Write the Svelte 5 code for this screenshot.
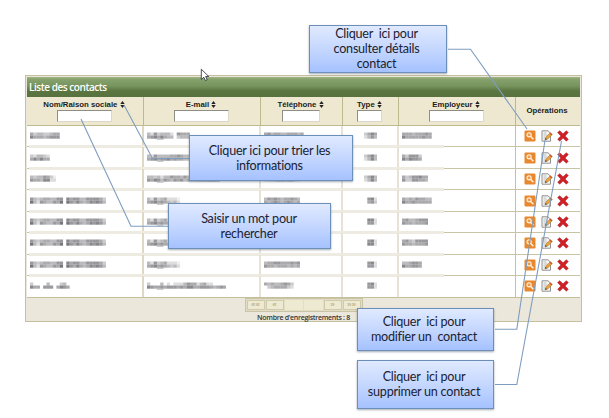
<script>
  const columns = [
    { label: 'Nom/Raison sociale', input: 55 },
    { label: 'E-mail', input: 55 },
    { label: 'Téléphone', input: 38 },
    { label: 'Type', input: 25 },
    { label: 'Employeur', input: 55 }
  ];

  // Anonymised cell contents: one digit of ink density per block, two bands per cell.
  const full = ['64345544660756644666653', '84265446580865754576764'];
  const mail = ['4263452221', '5675654342'];
  const rows = [
    [['534433455', '755545666'], ['4263444206555', '5675754403444'], ['564554455545', '000000000000'], ['3575', '2464'], ['555455565', '755555655']],
    [['324432', '575755'], ['42644445565444', '56756675655444'], ['453445', '444444'], ['3574', '2474'], ['536663', '757665']],
    [['43446531', '65547722'], ['4434244655464544345464', '6576465465645334445554'], ['54445565434', '12234434421'], ['3574', '2474'], ['53466755', '63366554']],
    [full, [mail[0], mail[1]], ['46565455654', '54565456545'], ['0672', '0563'], ['545465544', '755655555']],
    [full, [mail[0], mail[1]], ['45455565565', '54455565454'], ['0772', '0662'], ['56445666', '65545556']],
    [full, [mail[0], mail[1]], ['46545455655', '65554566544'], ['0672', '0772'], ['56436666', '65545556']],
    [full, [mail[0], mail[1]], ['45566555656', '65545554545'], ['0672', '0662'], ['445665', '755665']],
    [['3000040003400', '7550666057650'], ['300040202224655245220000', '765565666565775566654565'], ['545445653', '034555532'], ['0672', '0662'], null]
  ];
  const ink = (d) => Math.min(1, Number(d) * 0.125);

  const notes = [
    { cls: 'n1', lines: ['Cliquer  ici pour', 'consulter détails', 'contact'] },
    { cls: 'n2', lines: ['Cliquer ici pour trier les', 'informations'] },
    { cls: 'n3', lines: ['Saisir un mot pour', 'rechercher'] },
    { cls: 'n4', lines: ['Cliquer  ici pour', 'modifier un  contact'] },
    { cls: 'n5', lines: ['Cliquer  ici pour', 'supprimer un contact'] }
  ];
</script>

<main>
  <section class="panel">
    <h1>Liste des contacts</h1>
    <div class="grid head">
      {#each columns as c}
        <div class="th">
          <div class="label">{c.label}
            <svg width="5" height="7" viewBox="0 0 5 7"><path d="M2.5 0 4.7 3H.3ZM.3 4h4.400L2.500 7Z" fill="#222" /></svg>
          </div>
          <input style="width:{c.input}px" aria-label={c.label} />
        </div>
      {/each}
      <div class="th ops">Opérations</div>
    </div>
    <div class="body">
      {#each rows as row}
        <div class="grid row">
          {#each row as cell, i}
            <div class="td c{i}">
              {#if cell}
                <svg class="ink" width={cell[0].length * 3.3} height="8" viewBox="0 0 {cell[0].length * 3.3} 8">
                  {#each cell as band, b}
                    {#each band.split('') as d, k}
                      <rect x={k * 3.3} y={b ? 3.5 : 0.5} width="3.35" height={b ? 3.2 : 3} fill="#77767c" opacity={ink(d)} />
                      {#if b && i === 1 && (k === 3 || k === 4)}
                        <rect x={k * 3.3} y="6.7" width="3.3" height="1.3" fill="#999" opacity=".5" />
                      {/if}
                    {/each}
                  {/each}
                </svg>
              {/if}
            </div>
          {/each}
          <div class="td tools">
            <svg width="12" height="12" viewBox="0 0 11 12">
              <rect x="0" y=".5" width="11" height="11" rx="1.3" fill="#e8872d" />
              <circle cx="4.6" cy="4.8" r="2.1" fill="#ee9c50" stroke="#fff3df" stroke-width="1.1" />
              <path d="m6.2 6.5 2.7 2.8" stroke="#fff3df" stroke-width="1.4" />
            </svg>
            <svg width="12" height="12" viewBox="0 0 12 12">
              <path d="M1 .8h6l2.5 2.4v8H1Z" fill="#f7f7f5" stroke="#858585" stroke-width=".9" />
              <path d="M2.5 3h3M2.5 5h4M2.5 7h2.3M2.5 9h2" stroke="#a9b0b5" stroke-width=".8" />
              <path d="m4.2 9.8.7-2.7 4.400-4.400 1.900 1.900L6.800 9Z" fill="#eba33c" stroke="#a96b2c" stroke-width=".5" />
              <path d="m8.500 3.500 1-1 1.900 1.900-1 1Z" fill="#c9562e" />
              <path d="m4.200 9.800.400-1.700 1.400 1.200Z" fill="#333" />
            </svg>
            <svg width="12" height="12" viewBox="0 0 12 12">
              <path d="M.6 2.500 2.700.700 6 3.800 9.400.700l1.900 1.900L8.100 6l3.200 3.200-1.900 2L6 8.100l-3.300 3.100-2-2L3.800 6Z" fill="#cf2026" stroke="#a91920" stroke-width=".5" />
            </svg>
          </div>
        </div>
      {/each}
    </div>
    <footer>
      <div class="pager">
        <b>««</b><b>«</b><i></i><i></i><b>»</b><b>»»</b>
      </div>
      <p>Nombre d'enregistrements : 8</p>
    </footer>
  </section>

  <svg class="links" width="609" height="418" viewBox="0 0 609 418">
    <g fill="none" stroke="#7f9dbf" stroke-width="1.1">
      <path d="M448 49.2h22.5L527 129" />
      <path d="M190 158.5h-37.500L124 105" />
      <path d="M169 226.300h-38L81 119" />
      <path d="M495 329.300h21.800L545 140" />
      <path d="M495 384.500h21.800L561.500 141" />
    </g>
    <path d="M201.300 69.200v10.300l2.500-2.200 1.700 3.300 1.700-.9-1.600-3.200h3.200Z" fill="#fff" stroke="#333b48" stroke-width=".9" />
  </svg>

  {#each notes as n}
    <div class="note {n.cls}">
      {#each n.lines as line}<span>{line}</span>{/each}
    </div>
  {/each}
</main>

<style>
  main {
    position: relative;
    width: 609px;
    height: 418px;
    overflow: hidden;
    background: #fff;
    font-family: "Liberation Sans", Arial, sans-serif;
    display: flex;
    align-items: flex-start;
  }
  .panel {
    box-sizing: border-box;
    width: 557px;
    height: 247px;
    margin: 75px 0 0 25px;
    padding: 1px;
    border: 1px solid #c5bf9d;
    background: #ebe8db;
  }
  h1 {
    box-sizing: border-box;
    margin: 0;
    height: 19.5px;
    padding-left: 2px;
    background: linear-gradient(#a0b588 0, #86a16c 12%, #77945e 45%, #5a753f 70%, #58723f 100%);
    color: #fff;
    font: 600 10px/20px "Open Sans", sans-serif;
    letter-spacing: -0.450px;
  }
  .grid {
    display: grid;
    grid-template-columns: 117px 117px 82px 56px 117px 64px;
  }
  .head {
    height: 29.500px;
    background: #ede8cf;
    box-sizing: border-box;
    border-bottom: 1px solid #bfb98f;
  }
  .th {
    box-sizing: border-box;
    border-right: 1px solid #bfb98f;
    display: flex;
    flex-direction: column;
    align-items: center;
    padding: 3px 2px 0 0;
    font-weight: bold;
    font-size: 7.800px;
    color: #1c1c1c;
  }
  .label {
    height: 10px;
    line-height: 10px;
    white-space: nowrap;
  }
  .label svg { vertical-align: -1px; margin-left: 0; }
  .th.ops { justify-content: center; padding: 0 2px 0 0; border: 0; }
  input {
    box-sizing: border-box;
    height: 12px;
    padding: 0;
    border: 1px solid #8f8e85;
    border-right-color: #ddd9ca;
    border-bottom-color: #ddd9ca;
    background: #fff;
    border-radius: 0;
  }
  .body { background: #fff; }
  .row {
    height: 21.450px;
    box-sizing: border-box;
    border-bottom: 1px solid #c9c4a3;
  }
  .td {
    position: relative;
    box-sizing: border-box;
    display: flex;
    align-items: center;
    padding: 0 0 0 3px;
    border-right: 2px solid #e6e2d5;
  }
  .c0 { border-right-color: #ded9c5; }
  .c3 { justify-content: center; padding: 0 0 0 1px; }
  .c4 { border-right: 1px solid #c5bf9d; }
  .row:not(:last-child) .c0::after,
  .row:not(:last-child) .c1::after,
  .row:not(:last-child) .c2::after,
  .row:not(:last-child) .c3::after,
  .row:not(:last-child) .c4::after {
    content: "";
    position: absolute;
    left: 0;
    right: -2px;
    bottom: -2px;
    height: 3px;
    background: #eeebe2;
  }
  .row:not(:last-child) .c0::after { left: 2px; }
  .row:not(:last-child) .c4::after { right: 71px; }
  .ink { filter: blur(0.4px); }
  .tools {
    border: 0;
    padding: 0 0 0 7.500px;
    gap: 4px;
  }
  .tools svg:first-child { margin-right: 1px; }
  footer {
    display: flex;
    flex-direction: column;
    align-items: center;
    border-top: 1px solid #c5bf9d;
    margin-top: -1px;
  }
  .pager {
    box-sizing: border-box;
    width: 118px;
    height: 14px;
    padding: 1px;
    border: 1px solid #c9c4a6;
    display: grid;
    grid-template-columns: 18px 18px 1fr 1fr 18px 18px;
    gap: 1px;
    background: #e2ddc6;
  }
  .pager b, .pager i {
    box-sizing: border-box;
    background: #eee9d1;
    color: #bdb68f;
    font-size: 8px;
    line-height: 7px;
    text-align: center;
  }
  .pager b { border: 1px solid #d0caac; }
  p {
    margin: 0;
    font: 600 7px/11px "Open Sans", sans-serif;
    color: #333;
    letter-spacing: -0.300px;
    white-space: nowrap;
  }
  .links { position: absolute; left: 0; top: 0; }
  .note {
    position: absolute;
    box-sizing: border-box;
    display: flex;
    flex-direction: column;
    align-items: center;
    justify-content: center;
    padding: 0 3px 1px 0;
    border: 1px solid #6c8fba;
    background: linear-gradient(#e0eaff, #c5d7ff 50%, #a5c2ff);
    box-shadow: 0 1px 2px rgba(70, 85, 110, 0.5);
    font: 12.600px/15px Lato, sans-serif;
    font-variant-ligatures: none;
    letter-spacing: -0.250px;
    color: #1b2230;
    white-space: pre;
  }
  .n1 { left: 309px; top: 25px; width: 138px; height: 48px; }
  .n2 { left: 189px; top: 135px; width: 164px; height: 46px; }
  .n3 { left: 168px; top: 203px; width: 163px; height: 46px; padding-right: 1px; }
  .n4 { left: 357px; top: 308px; width: 137px; height: 43px; }
  .n5 { left: 357px; top: 360px; width: 137px; height: 49px; }
</style>
